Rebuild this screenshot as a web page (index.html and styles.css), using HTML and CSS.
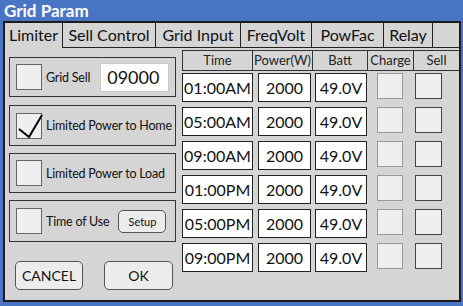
FILE: index.html
```html
<!DOCTYPE html>
<html lang="en">
<head>
    <meta charset="UTF-8">
    <meta name="viewport" content="width=device-width, initial-scale=1.0">
    <title>Grid Param</title>
    <link rel="stylesheet" href="styles.css">
</head>
<body>
    <div class="title">Grid Param</div>
    <div class="window">
        <div class="tabs">
            <div class="tab active" style="width:58px">Limiter</div>
            <div class="tab" style="width:93px">Sell Control</div>
            <div class="tab" style="width:85px">Grid Input</div>
            <div class="tab" style="width:71px">FreqVolt</div>
            <div class="tab" style="width:72px">PowFac</div>
            <div class="tab" style="width:49px">Relay</div>
            <div class="tab filler"></div>
        </div>
        <div class="content">
            <div class="left">
                <div class="group g1">
                    <div class="check"></div>
                    <span class="label">Grid Sell</span>
                    <div class="sell-input">09000</div>
                </div>
                <div class="group g2">
                    <div class="check">
                        <svg width="28" height="28" viewBox="0 0 28 28"><path d="M2 15 L12 23 L25 1" fill="none" stroke="#000" stroke-width="2"/></svg>
                    </div>
                    <span class="label">Limited Power to Home</span>
                </div>
                <div class="group g3">
                    <div class="check"></div>
                    <span class="label">Limited Power to Load</span>
                </div>
                <div class="group g4">
                    <div class="check"></div>
                    <span class="label">Time of Use</span>
                    <div class="setup">Setup</div>
                </div>
                <div class="buttons">
                    <div class="btn cancel">CANCEL</div>
                    <div class="btn ok">OK</div>
                </div>
            </div>
            <div class="table">
                <div class="thead">
                    <div class="th c-time">Time</div>
                    <div class="th c-power">Power(W)</div>
                    <div class="th c-batt">Batt</div>
                    <div class="th c-charge">Charge</div>
                    <div class="th c-sell">Sell</div>
                </div>
                <div class="row">
                    <div class="box time">01:00AM</div><div class="box power">2000</div><div class="box batt">49.0V</div><div class="cb charge"></div><div class="cb sell"></div>
                </div>
                <div class="row">
                    <div class="box time">05:00AM</div><div class="box power">2000</div><div class="box batt">49.0V</div><div class="cb charge"></div><div class="cb sell"></div>
                </div>
                <div class="row">
                    <div class="box time">09:00AM</div><div class="box power">2000</div><div class="box batt">49.0V</div><div class="cb charge"></div><div class="cb sell"></div>
                </div>
                <div class="row">
                    <div class="box time">01:00PM</div><div class="box power">2000</div><div class="box batt">49.0V</div><div class="cb charge"></div><div class="cb sell"></div>
                </div>
                <div class="row">
                    <div class="box time">05:00PM</div><div class="box power">2000</div><div class="box batt">49.0V</div><div class="cb charge"></div><div class="cb sell"></div>
                </div>
                <div class="row">
                    <div class="box time">09:00PM</div><div class="box power">2000</div><div class="box batt">49.0V</div><div class="cb charge"></div><div class="cb sell"></div>
                </div>
            </div>
        </div>
    </div>
</body>
</html>
```

FILE: styles.css
```css
body {
    margin: 0;
    width: 463px;
    height: 306px;
    overflow: hidden;
    background: #4a75c4;
    font-family: Lato, "Open Sans", sans-serif;
    color: #111;
}
.title {
    height: 21px;
    line-height: 21px;
    padding-left: 4px;
    color: #fff;
    font-weight: bold;
    font-size: 17px;
}
.window {
    box-sizing: border-box;
    margin-left: 3px;
    width: 458px;
    height: 281px;
    border: 2px solid #1c1c1c;
    background: #d5d5d5;
}
.tabs {
    display: flex;
    height: 25px;
}
.tab {
    box-sizing: border-box;
    height: 25px;
    border-right: 1px solid #222;
    border-bottom: 1px solid #222;
    font-size: 16px;
    line-height: 24px;
    text-align: center;
}
.tab.active {
    border-bottom: none;
}
.tab.filler {
    flex: 1;
    border-right: none;
}
.content {
    display: flex;
}
.left {
    width: 168px;
    margin-left: 4px;
    padding-top: 9px;
    display: flex;
    flex-direction: column;
}
.group {
    box-sizing: border-box;
    display: flex;
    align-items: center;
    border: 1px solid #333;
    padding-left: 6px;
    margin-bottom: 7px;
}
.g1 { height: 40px; margin-bottom: 8px; }
.g2 { height: 41px; }
.g3 { height: 40px; }
.g4 { height: 42px; }
.check {
    box-sizing: border-box;
    width: 26px;
    height: 26px;
    border: 1px solid #666;
    background: #efefef;
    flex-shrink: 0;
    position: relative;
}
.check svg {
    position: absolute;
    left: 0;
    top: 0;
}
.label {
    margin-left: 4px;
    font-size: 12.5px;
    letter-spacing: -0.2px;
    white-space: nowrap;
}
.sell-input {
    box-sizing: border-box;
    width: 69px;
    height: 29px;
    margin-left: 10px;
    background: #fff;
    border: 1px solid #c8c8c8;
    font-size: 18px;
    line-height: 27px;
    padding-left: 6px;
}
.setup {
    box-sizing: border-box;
    width: 48px;
    height: 23px;
    margin-left: 9px;
    border: 1px solid #555;
    border-radius: 5px;
    background: #ececec;
    font-size: 11px;
    line-height: 21px;
    text-align: center;
}
.buttons {
    display: flex;
    margin-top: 12px;
}
.btn {
    box-sizing: border-box;
    height: 29px;
    border: 1px solid #555;
    border-radius: 5px;
    background: #ececec;
    font-size: 14px;
    line-height: 27px;
    text-align: center;
}
.cancel { width: 68px; margin-left: 6px; }
.ok { width: 69px; margin-left: 21px; }
.table {
    margin-left: 6px;
    padding-top: 2px;
}
.thead {
    display: flex;
    height: 21px;
    margin-bottom: 2px;
}
.th {
    box-sizing: border-box;
    height: 21px;
    border: 1px solid #333;
    margin-left: -1px;
    font-size: 13px;
    line-height: 19px;
    text-align: center;
    color: #222;
}
.th.c-time { width: 71px; margin-left: 0; }
.c-power { width: 61px; }
.c-batt { width: 56px; }
.c-charge { width: 47px; }
.c-sell { width: 46px; border-right: none; }
.row {
    display: flex;
    height: 29px;
    margin-bottom: 5px;
}
.box {
    box-sizing: border-box;
    height: 29px;
    background: #fff;
    border: 1px solid #222;
    font-size: 16px;
    line-height: 27px;
    text-align: center;
}
.box.time { width: 71px; }
.box.power { width: 53px; margin-left: 5px; }
.box.batt { width: 52px; margin-left: 4px; }
.cb {
    box-sizing: border-box;
    width: 26px;
    height: 26px;
    background: #efefef;
    border: 1px solid #777;
}
.cb.charge { margin-left: 10px; border-color: #999; }
.cb.sell { width: 27px; margin-left: 12px; border-color: #444; }
```
